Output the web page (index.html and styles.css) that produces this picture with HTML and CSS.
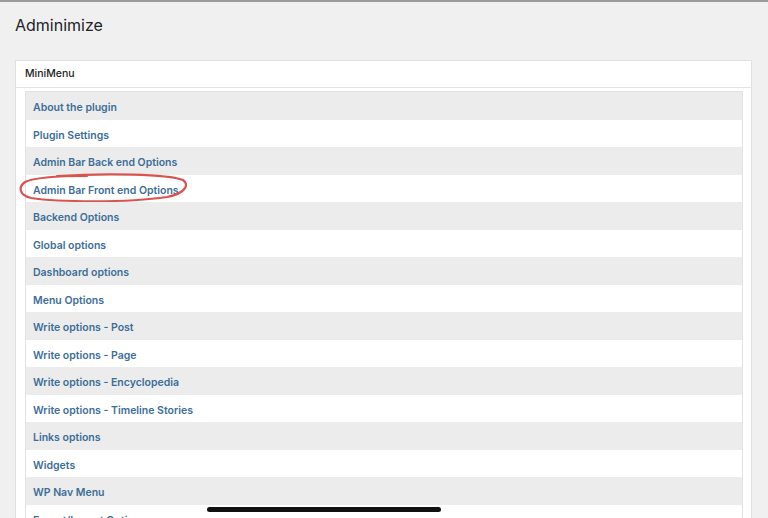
FILE: index.html
```html
<!DOCTYPE html>
<html lang="en">
<head>
    <meta charset="UTF-8">
    <meta name="viewport" content="width=device-width, initial-scale=1.0">
    <title>Adminimize</title>
    <link rel="stylesheet" href="styles.css">
</head>
<body>

    <div class="wrap">
        <h1 class="title">Adminimize</h1>

        <div class="box">
            <div class="box-head">MiniMenu</div>

            <div class="box-inside">
                <ul class="minimenu">
                    <li class="alt"><a href="#">About the plugin</a></li>
                    <li><a href="#">Plugin Settings</a></li>
                    <li class="alt"><a href="#">Admin Bar Back end Options</a></li>
                    <li class="marked">
                        <a href="#">Admin Bar Front end Options</a>
                        <!-- red pen circle -->
                        <svg class="circle" width="172" height="30" viewBox="0 0 172 30">
                            <path d="M40 3 C 90 0, 150 1, 166 7 C 172 11, 170 20, 150 24 C 110 30, 40 29, 14 25 C 2 22, 1 14, 8 9 C 18 4, 40 3, 70 3"
                                  fill="none" stroke="#d9534f" stroke-width="2.2" stroke-linecap="round"/>
                        </svg>
                    </li>
                    <li class="alt"><a href="#">Backend Options</a></li>
                    <li><a href="#">Global options</a></li>
                    <li class="alt"><a href="#">Dashboard options</a></li>
                    <li><a href="#">Menu Options</a></li>
                    <li class="alt"><a href="#">Write options - Post</a></li>
                    <li><a href="#">Write options - Page</a></li>
                    <li class="alt"><a href="#">Write options - Encyclopedia</a></li>
                    <li><a href="#">Write options - Timeline Stories</a></li>
                    <li class="alt"><a href="#">Links options</a></li>
                    <li><a href="#">Widgets</a></li>
                    <li class="alt"><a href="#">WP Nav Menu</a></li>
                    <li><a href="#">Export/Import Options</a></li>
                </ul>
            </div>
        </div>
    </div>

    <div class="home-bar"></div>

</body>
</html>
```

FILE: styles.css
```css
html, body {
    height: 100%;
}

body {
    margin: 0;
    background-color: #f0f0f0;
    border-top: 2px solid #9a9a9a;
    box-sizing: border-box;
    overflow: hidden;
    font-family: Inter, "Noto Sans", sans-serif;
}

.wrap {
    padding: 0 16px 0 15px;
}

.title {
    margin: 0;
    padding-top: 13px;
    height: 58px;
    box-sizing: border-box;
    font-size: 16px;
    font-weight: 400;
    color: #1d2327;
}

.box {
    background-color: #fff;
    border: 1px solid #e0e0e0;
}

.box-head {
    height: 26px;
    line-height: 25px;
    padding-left: 9px;
    font-size: 10.5px;
    font-weight: 500;
    color: #222;
    border-bottom: 1px solid #e3e3e3;
}

.box-inside {
    padding: 3px 8px 0 9px;
}

.minimenu {
    list-style: none;
    margin: 0;
    padding: 0;
    border: 1px solid #e2e2e2;
}

.minimenu li {
    position: relative;
    height: 27.5px;
    line-height: 26px;
    padding-left: 7px;
    background-color: #fff;
}

.minimenu li.alt {
    background-color: #ececec;
}

.minimenu a {
    font-size: 10.5px;
    font-weight: 600;
    color: #3c6e98;
    text-decoration: none;
}

.circle {
    position: absolute;
    left: -9px;
    top: -2px;
}

.home-bar {
    position: absolute;
    left: 207px;
    top: 507px;
    width: 234px;
    height: 5px;
    border-radius: 3px;
    background-color: #111;
}
```
